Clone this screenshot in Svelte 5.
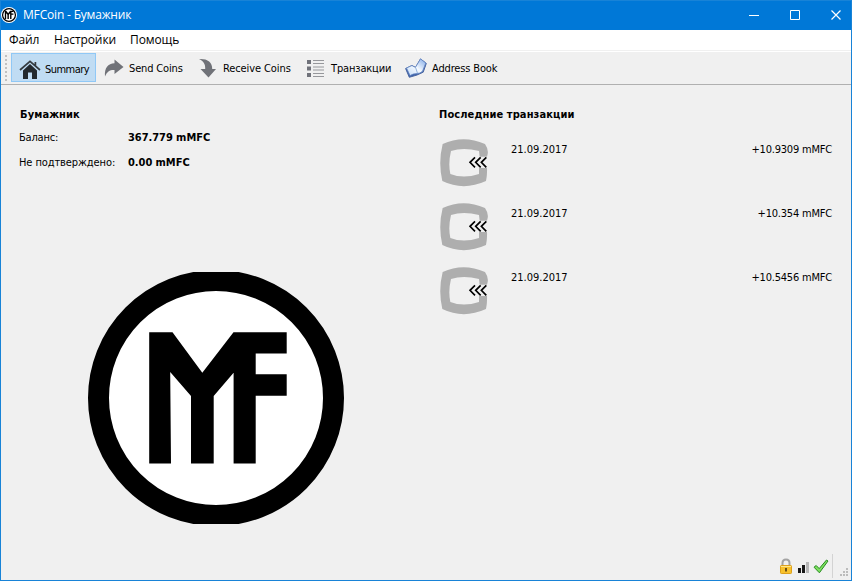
<script>
  const menus = [
    { text: 'Файл', w: 29 },
    { text: 'Настройки', w: 60 },
    { text: 'Помощь', w: 49 }
  ];
  const transactions = [
    { date: '21.09.2017', amount: '+10.9309 mMFC' },
    { date: '21.09.2017', amount: '+10.354 mMFC' },
    { date: '21.09.2017', amount: '+10.5456 mMFC' }
  ];
</script>

{#snippet monogram()}
  <path d="M61.2 60.3H84.5L114.3 100.7L145.5 60.3H198.7V81.5H167.7V102.3H198.7V123.7H167.7V191.5H145.6V100.7L125.7 124V191.5H103V124L82.2 100L83 191.5H61.2Z" />
{/snippet}

<div class="window">
  <header>
    <svg class="app-icon" width="16" height="16" viewBox="0 0 256 256">
      <circle cx="128" cy="128" r="128" fill="#fff" />
      <circle cx="128" cy="128" r="103" fill="#fff" stroke="#000" stroke-width="20" />
      {@render monogram()}
    </svg>
    <span class="title">MFCoin - Бумажник</span>
    <svg class="controls" width="92" height="12" viewBox="0 0 92 12" fill="none" stroke="#fff">
      <path d="M0 6.5H10M41.5 1.5h9v9h-9z" /><path d="M82.5 1.5l9 9M91.5 1.5l-9 9" stroke-width="1.2" />
    </svg>
  </header>

  <nav>
    {#each menus as m}<span style:width="{m.w}px">{m.text}</span>{/each}
  </nav>

  <div class="toolbar">
    <div class="grip"></div>
    <button class="tool active">
      <svg width="22" height="20" viewBox="0 0 22 20">
        <path d="M4 11.5L11 5L18 11.5V20H13V13.5H9V20H4Z" fill="#24292e" />
        <path d="M1 11L11 2.4L21 11M16.4 3V7" fill="none" stroke="#353b40" stroke-width="1.7" />
      </svg>
      <span>Summary</span>
    </button>
    <button class="tool send">
      <svg width="20" height="20" viewBox="0 0 20 20">
        <path d="M10.5 1.5L19.5 9L10.5 16V12C6 11.7 3 13.5 1 18.5C.3 10 4 5.6 10.5 5.3Z" fill="#707278" />
      </svg>
      <span>Send Coins</span>
    </button>
    <button class="tool receive">
      <svg width="20" height="20" viewBox="0 0 20 20">
        <path d="M1 1C9 .5 14.5 3.8 14.2 11H18L10.5 19.5L2.5 11H7.2C7.5 6 5.5 3 1 1Z" fill="#707278" />
      </svg>
      <span>Receive Coins</span>
    </button>
    <button class="tool list">
      <svg width="19" height="19" viewBox="0 0 19 19">
        <path d="M1 1h4v4H1zM1 7.5h4v4H1zM1 14h4v4H1z" fill="#70727a" />
        <path d="M7 1.5h11M7 4.5h11M7 8h11M7 11h11M7 14.5h11M7 17.5h11" stroke="#96979b" stroke-width="1.1" />
      </svg>
      <span>Транзакции</span>
    </button>
    <button class="tool book">
      <svg width="22" height="20" viewBox="0 0 22 20">
        <defs>
          <linearGradient id="page" x1="0" y1="1" x2="1" y2="0">
            <stop offset="0" stop-color="#c4dcf8" /><stop offset=".5" stop-color="#f5faff" /><stop offset="1" stop-color="#7ba6e6" />
          </linearGradient>
        </defs>
        <path d="M.6 10.5L7 7.5L10.5 9.5L15.5 1L21.3 5.4L18.2 14.2L12 17L4.3 19.3Z" fill="#3d62aa" stroke="#4a66a0" />
        <path d="M1.5 10L7 7.5Q9 9 10.5 9.3L15.5 .8L20.8 5L17.5 13.3Q15 15.5 12 15.6Q8 15.5 5 17.6Z" fill="url(#page)" stroke="#6385c2" stroke-width=".8" />
        <path d="M10.5 9.3L12.5 15.3" stroke="#7ba0d3" stroke-width=".8" />
      </svg>
      <span>Address Book</span>
    </button>
  </div>

  <main>
    <section class="wallet">
      <h2>Бумажник</h2>
      <div class="row"><span class="label balance">Баланс:</span><b>367.779 mMFC</b></div>
      <div class="row second"><span class="label">Не подтверждено:</span><b>0.00 mMFC</b></div>
      <svg class="big-logo" width="256" height="252" viewBox="0 0 256 252">
        <circle cx="128" cy="126" r="117.5" fill="#fff" stroke="#000" stroke-width="21" />
        {@render monogram()}
      </svg>
    </section>
    <section class="recent">
      <h2>Последние транзакции</h2>
      {#each transactions as t}
        <div class="tx">
          <svg width="50" height="50" viewBox="30 114 150 150">
            <path d="M38 132Q100 103 165 132Q176 148 173 162L171 170H149L147 153Q100 141 63 153Q54 190 61 222Q100 237 147 222V204H171Q172 225 168 243Q100 274 37 243Q24 188 38 132Z" fill="#aeaeae" />
            <path d="M135 172L120 187L135 202M152 172L137 187L152 202M169 172L154 187L169 202" fill="none" stroke="#f4f4f4" stroke-width="8" />
            <path d="M135 172L120 187L135 202M152 172L137 187L152 202M169 172L154 187L169 202" fill="none" stroke="#000" stroke-width="5" />
          </svg>
          <span class="date">{t.date}</span>
          <span class="amount">{t.amount}</span>
        </div>
      {/each}
    </section>
  </main>

  <footer>
    <svg width="14" height="17" viewBox="0 0 14 17">
      <path d="M3.5 9V5Q3.5 1.5 7 1.5T10.5 5V9" fill="none" stroke="#a3a3a3" stroke-width="2" />
      <rect x="1.5" y="7.5" width="11" height="8" rx=".8" fill="#f8c12b" stroke="#dda01a" />
      <path d="M2 8.5h10" stroke="#ffe78c" /><path d="M7 10v3.5" stroke="#5d4311" stroke-width="1.8" />
    </svg>
    <svg class="bars" width="12" height="12" viewBox="0 0 12 12">
      <path d="M0 7h3v5H0zM4 4h3V12H4z" fill="#181818" /><path d="M8 1h3v11H8z" fill="#b7b7b7" />
    </svg>
    <svg class="check" width="16" height="15" viewBox="0 0 16 15">
      <path d="M1 8.2L3.2 6.5L6.2 9.6L13.5 1L15 2L6.4 13.8Z" fill="#7de05f" stroke="#278b20" />
    </svg>
    <div class="divider"></div>
    <svg class="resize" width="9" height="9" viewBox="0 0 9 9">
      <path d="M6 0h2v2H6zM3 3h2v2H3zM6 3h2v2H6zM0 6h2v2H0zM3 6h2v2H3zM6 6h2v2H6z" fill="#bcbcbc" />
    </svg>
  </footer>
</div>

<style>
  :global(body) { margin: 0; }
  .window { box-sizing: border-box; width: 852px; height: 581px; display: flex; flex-direction: column; overflow: hidden; border: 1px solid #1883d7; border-top: 0; background: #f0f0f0; color: #000; font: 11px/15px "DejaVu Sans Condensed", "DejaVu Sans", sans-serif; font-stretch: condensed; white-space: nowrap; }
  svg { display: block; flex: none; }
  header { height: 30px; flex: none; box-sizing: border-box; border-top: 1px solid #1883d7; background: #0078d7; color: #fff; display: flex; align-items: center; }
  .app-icon { margin-top: -1px; }
  .title { font: 12px/16px "Open Sans", sans-serif; letter-spacing: -0.18px; margin: -1px 0 0 6px; }
  .controls { margin: -2px 10px 0 auto; }
  nav { height: 20px; flex: none; background: #fff; display: flex; gap: 16px; padding-left: 8px; font: 12px/20px "Open Sans", sans-serif; letter-spacing: -0.1px; border-bottom: 1px solid #f0f0f0; }
  .toolbar { height: 32px; flex: none; border-top: 1px solid #fff; border-bottom: 1px solid #b0b0b0; display: flex; align-items: center; }
  .grip { width: 2px; height: 26px; margin-left: 4px; background: repeating-linear-gradient(#c0c0c0 0 2px, transparent 2px 4px); }
  .tool { appearance: none; box-sizing: border-box; border: 0; margin: 0; padding: 0; background: none; color: #000; font: inherit; letter-spacing: -0.15px; height: 29px; display: flex; flex: none; align-items: center; }
  .active { width: 85px; margin: -1px 0 0 4px; border: 1px solid #90c8f6; background: #c0dcf3; padding: 3px 0 0 7px; gap: 4px; letter-spacing: -0.55px; }
  .send { margin-left: 8px; width: 94px; gap: 5px; }
  .receive { width: 108px; gap: 5px; letter-spacing: -0.1px; }
  .list { width: 99px; gap: 6px; }
  .book { gap: 5px; }
  main { flex: 1; display: flex; }
  .wallet { width: 438px; padding: 22px 0 0 18px; box-sizing: border-box; }
  .recent { flex: 1; padding: 22px 19px 0 0; }
  h2 { margin: 0; font: bold 11px/16px "DejaVu Sans Condensed", "DejaVu Sans", sans-serif; font-stretch: condensed; letter-spacing: 0.1px; }
  .wallet h2 { padding-left: 1px; }
  .row { display: flex; height: 25px; align-items: center; margin-top: 2px; }
  .row b { letter-spacing: -0.05px; }
  .second { margin-top: 0; }
  .label { width: 109px; letter-spacing: -0.1px; }
  .balance { letter-spacing: -0.2px; }
  .big-logo { margin: 97px 0 0 69px; }
  .tx { height: 64px; display: flex; align-items: flex-start; padding-left: 1px; }
  .recent h2 + .tx { margin-top: 15px; }
  .date { margin: 4px 0 0 21px; }
  .amount { margin: 4px 0 0 auto; letter-spacing: -0.2px; }
  footer { height: 28px; flex: none; display: flex; align-items: center; justify-content: flex-end; padding-right: 2px; }
  .bars { margin: 2px 0 0 5px; }
  .check { margin-left: 3px; }
  .divider { width: 1px; height: 24px; background: #d3d3d3; margin-left: 3px; }
  .resize { margin: 12px 0 0 7px; }
</style>
